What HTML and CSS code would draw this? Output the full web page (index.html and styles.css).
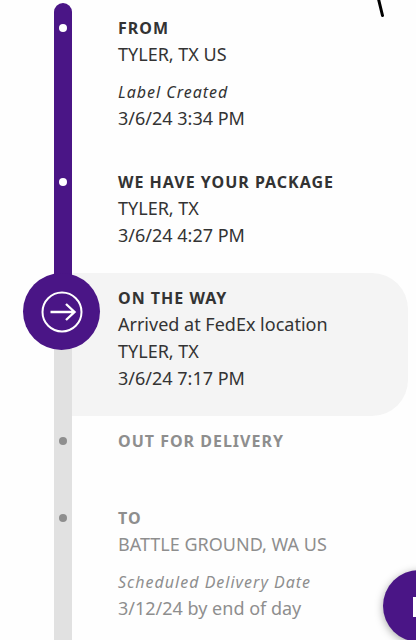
FILE: index.html
```html
<!DOCTYPE html>
<html lang="en">
<head>
<meta charset="utf-8">
<meta name="viewport" content="width=device-width, initial-scale=1">
<title>Shipment tracking</title>
<link rel="stylesheet" href="styles.css">
</head>
<body>
<svg class="stroke" viewBox="0 0 12 20" aria-hidden="true"><path d="M3-3 7.5 15.5" fill="none" stroke="#000" stroke-width="3" stroke-linecap="round"/></svg>
<main>
<ol class="timeline">
  <li class="step done">
    <div class="rail"><span class="dot"></span></div>
    <div class="details">
      <h2>FROM</h2>
      <p>TYLER, TX US</p>
      <p class="label">Label Created</p>
      <p>3/6/24 3:34 PM</p>
    </div>
  </li>
  <li class="step done">
    <div class="rail"><span class="dot"></span></div>
    <div class="details">
      <h2>WE HAVE YOUR PACKAGE</h2>
      <p>TYLER, TX</p>
      <p>3/6/24 4:27 PM</p>
    </div>
  </li>
  <li class="step current">
    <div class="rail">
      <span class="marker">
        <svg viewBox="0 0 42 42" fill="none" stroke="#fff" aria-hidden="true"><circle cx="21" cy="21" r="19.5" stroke-width="2"/><path d="M9.5 21H33M25 13l8.5 8L25 29" stroke-width="2.4"/></svg>
      </span>
    </div>
    <div class="details">
      <h2>ON THE WAY</h2>
      <p>Arrived at FedEx location</p>
      <p>TYLER, TX</p>
      <p>3/6/24 7:17 PM</p>
    </div>
  </li>
  <li class="step pending short">
    <div class="rail"><span class="dot"></span></div>
    <div class="details">
      <h2>OUT FOR DELIVERY</h2>
    </div>
  </li>
  <li class="step pending">
    <div class="rail"><span class="dot"></span></div>
    <div class="details">
      <h2>TO</h2>
      <p>BATTLE GROUND, WA US</p>
      <p class="label">Scheduled Delivery Date</p>
      <p>3/12/24 by end of day</p>
    </div>
  </li>
</ol>
</main>
<button class="chat" type="button" aria-label="Chat">
  <svg viewBox="0 0 72 72" aria-hidden="true"><path d="M30 27h20v20H30z" fill="#fff"/></svg>
</button>
</body>
</html>
```
FILE: styles.css
```css
* {
  box-sizing: border-box;
}

html {
  overflow: hidden;
}

body {
  margin: 0;
  background: #fefefe;
  color: #333;
  font-family: "Noto Sans", "Open Sans", sans-serif;
  font-size: 18px;
  line-height: 27px;
}

.timeline {
  list-style: none;
  margin: 0;
  padding: 3px 8px 0 54px;
}

.step {
  display: flex;
}

.rail {
  position: relative;
  flex: 0 0 18px;
  display: flex;
  justify-content: center;
  padding-top: 21px;
  background: #e1e1e1;
}

.done .rail {
  background: #4a1586;
}

.current .rail {
  background: linear-gradient(#4a1586 50%, #e1e1e1 50%) top / 100% 76px no-repeat #e1e1e1;
}

.dot {
  width: 8px;
  height: 8px;
  border-radius: 50%;
  background: #8e8e8e;
}

.done .dot {
  background: #fff;
}

.details {
  flex: 1;
  padding: 12px 16px 24px 46px;
}

.step:first-child .rail {
  border-radius: 9px 9px 0 0;
}

.step:first-child .details {
  padding-bottom: 25px;
}

.short .details {
  padding-bottom: 39px;
}

.current .details {
  background: #f4f4f4;
  border-radius: 0 36px 36px 0;
}

.marker {
  position: absolute;
  top: 0;
  left: -31px;
  display: grid;
  place-items: center;
  width: 77px;
  height: 77px;
  border-radius: 50%;
  background: #4a1586;
}

.marker svg {
  width: 42px;
  height: 42px;
}

h2,
p {
  margin: 0;
}

h2 {
  font-size: 16px;
  font-weight: 700;
  line-height: 26px;
  letter-spacing: 1px;
}

.label {
  margin-top: 12px;
  font-size: 16px;
  font-style: italic;
  line-height: 25px;
  letter-spacing: 1px;
}

.pending {
  color: #8e8e8e;
}

.stroke {
  position: absolute;
  top: 0;
  right: 29px;
  width: 12px;
  height: 20px;
}

.chat {
  position: fixed;
  right: -39px;
  bottom: -2px;
  width: 72px;
  height: 72px;
  padding: 0;
  border: 0;
  border-radius: 50%;
  background: #4a1586;
  box-shadow: 0 2px 8px rgba(0, 0, 0, 0.35);
}

.chat svg {
  display: block;
}
```
